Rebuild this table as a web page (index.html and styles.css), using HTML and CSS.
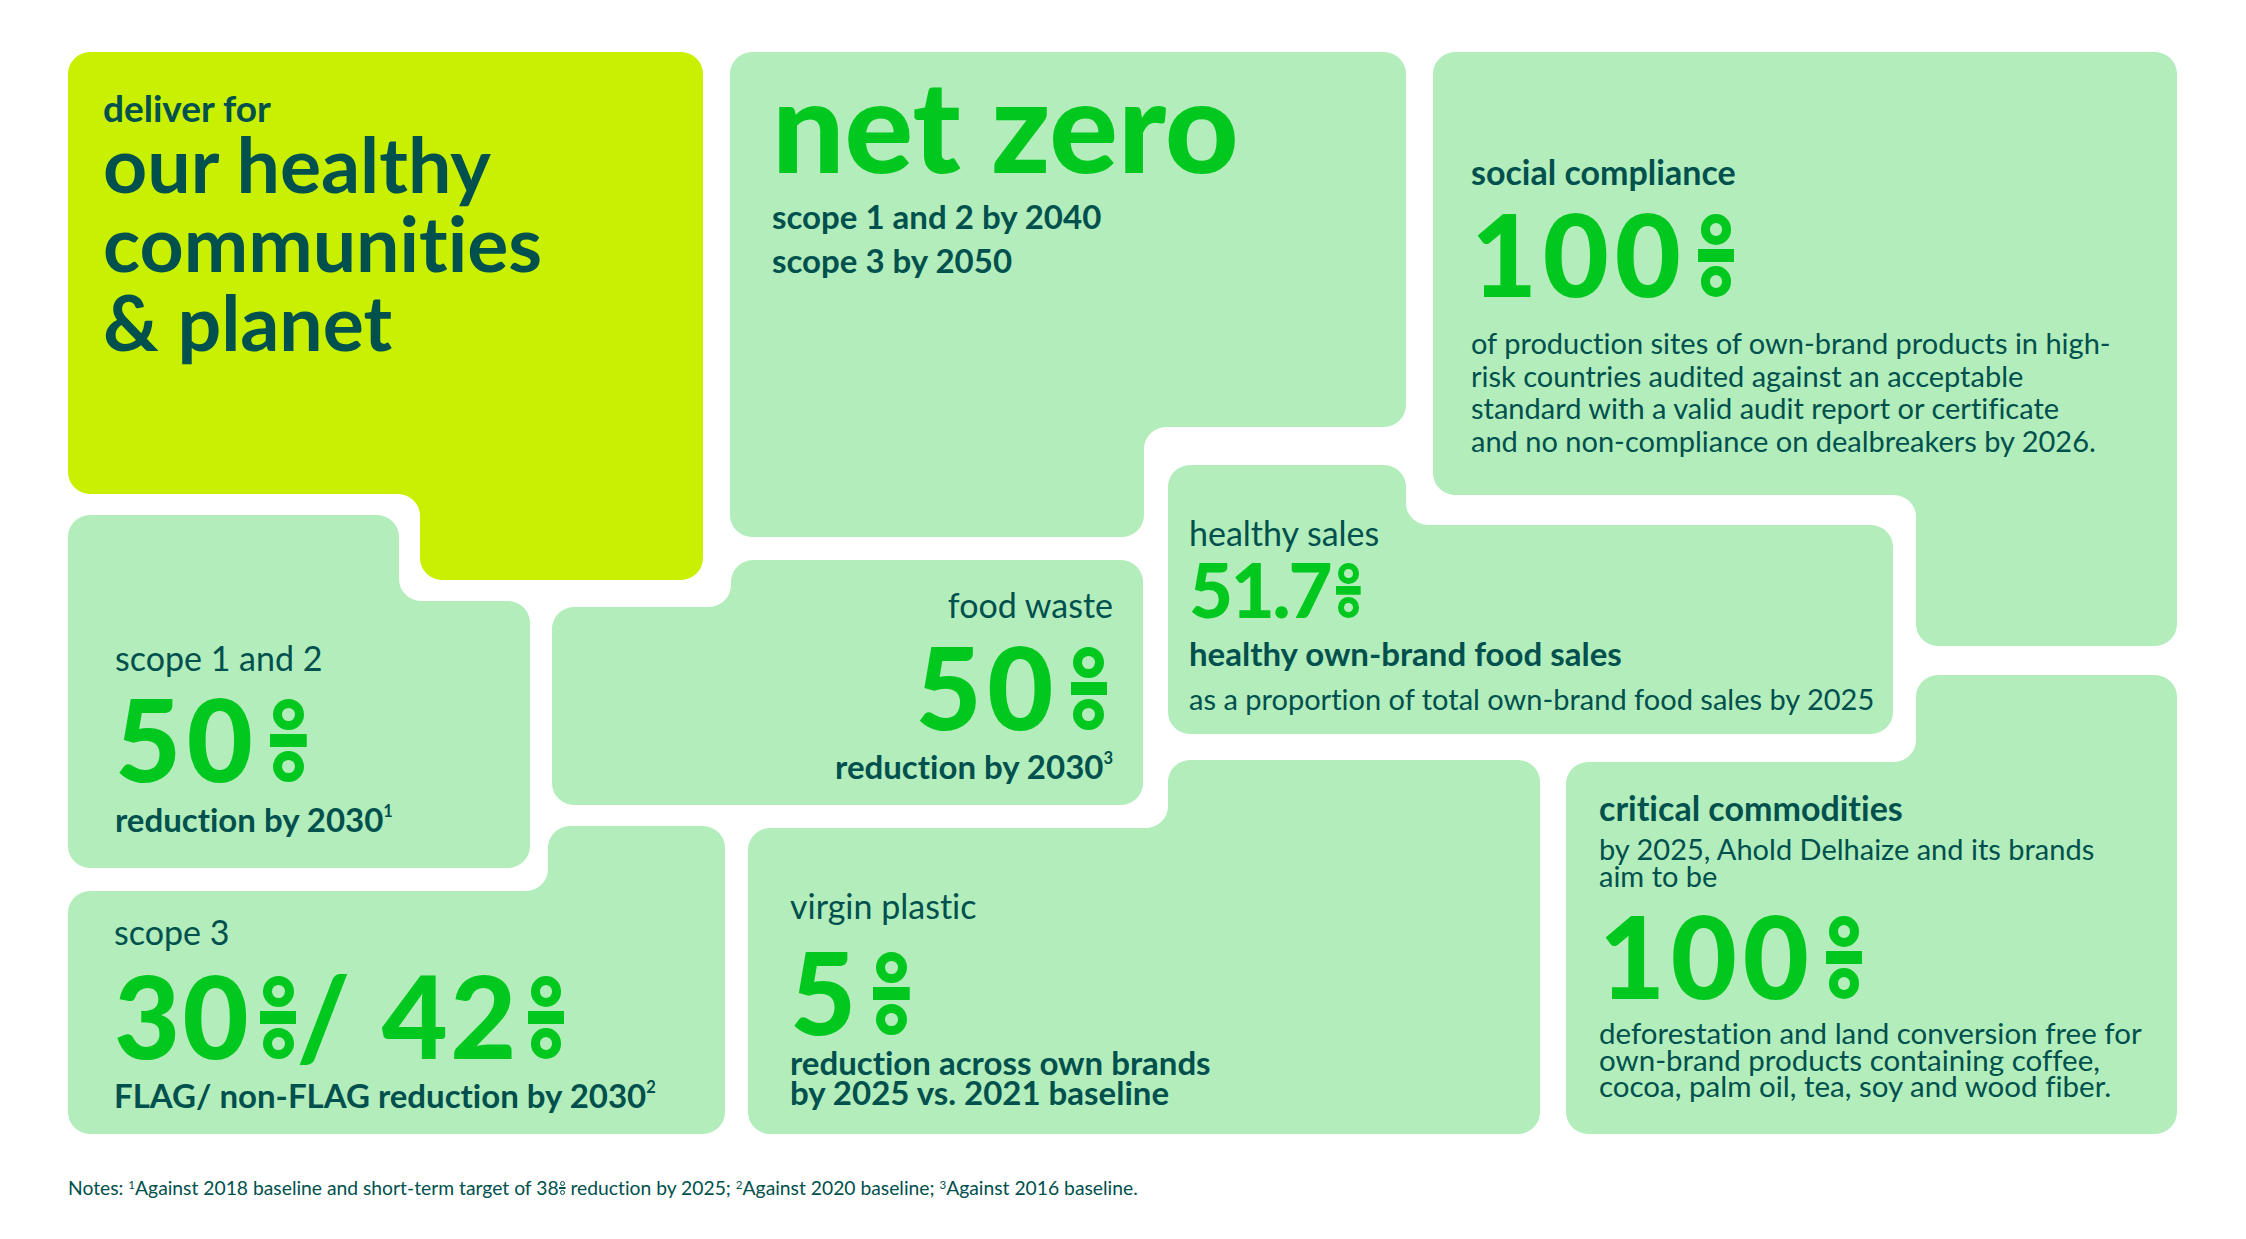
FILE: index.html
```html
<!DOCTYPE html>
<html lang="en">
<head>
<meta charset="utf-8">
<title>deliver for our healthy communities &amp; planet</title>
<link rel="stylesheet" href="styles.css">
</head>
<body>
<main class="board">
  <section class="card lime">
    <p class="kicker">deliver for</p>
    <h1 class="headline">our healthy<br>communities<br>&amp; planet</h1>
  </section>

  <section class="card net">
    <h2 class="netzero">net zero</h2>
    <p class="boldlines">scope 1 and 2 by 2040<br>scope 3 by 2050</p>
  </section>

  <section class="card social">
    <h3 class="head">social compliance</h3>
    <p class="big">100<span class="pct"><span class="pct-t">%</span></span></p>
    <p class="para">of production sites of own-brand products in high-risk countries audited against an acceptable standard with a valid audit report or certificate<br>and no non-compliance on dealbreakers by 2026.</p>
  </section>

  <section class="card s12">
    <p class="label">scope 1 and 2</p>
    <p class="big">50<span class="pct"><span class="pct-t">%</span></span></p>
    <p class="sub">reduction by 2030<sup>1</sup></p>
  </section>

  <section class="card food">
    <p class="label">food waste</p>
    <p class="big">50<span class="pct"><span class="pct-t">%</span></span></p>
    <p class="sub">reduction by 2030<sup>3</sup></p>
  </section>

  <section class="card healthy">
    <p class="label">healthy sales</p>
    <p class="mid">51.7<span class="pct"><span class="pct-t">%</span></span></p>
    <p class="sub">healthy own-brand food sales</p>
    <p class="line">as a proportion of total own-brand food sales by 2025</p>
  </section>

  <section class="card s3">
    <p class="label">scope 3</p>
    <p class="big">30<span class="pct"><span class="pct-t">%</span></span>/ 42<span class="pct"><span class="pct-t">%</span></span></p>
    <p class="sub">FLAG/ non-FLAG reduction by 2030<sup>2</sup></p>
  </section>

  <section class="card virgin">
    <p class="label">virgin plastic</p>
    <p class="big">5<span class="pct"><span class="pct-t">%</span></span></p>
    <p class="sub tight">reduction across own brands<br>by 2025 vs. 2021 baseline</p>
  </section>

  <section class="card critical">
    <h3 class="head">critical commodities</h3>
    <p class="intro">by 2025, Ahold Delhaize and its brands aim to be</p>
    <p class="big">100<span class="pct"><span class="pct-t">%</span></span></p>
    <p class="desc">deforestation and land conversion free for own-brand products containing coffee, cocoa, palm oil, tea, soy and wood fiber.</p>
  </section>
</main>
<p class="notes">Notes: <sup>1</sup>Against 2018 baseline and short-term target of 38<span class="pct"><span class="pct-t">%</span></span> reduction by 2025; <sup>2</sup>Against 2020 baseline; <sup>3</sup>Against 2016 baseline.</p>
</body>
</html>
```

FILE: styles.css
```css
:root {
  --card: #b2edbb;
  --lime: #c8f000;
  --green: #00c81e;
  --teal: #00504d;
}

html, body {
  margin: 0;
  padding: 0;
}

body {
  width: 2246px;
  height: 1239px;
  overflow: hidden;
  background: #ffffff;
  font-family: Lato, "Noto Sans", sans-serif;
  font-variant-ligatures: none;
  color: var(--teal);
}

p, h1, h2, h3 {
  margin: 0;
  font-weight: inherit;
}

.board {
  display: grid;
  width: 2109px;
  margin: 52px 0 0 68px;
  grid-template-columns: 462px 22px 151px 22px 5px 18px 395px 25px 238px 27px 107px 26px 327px 284px;
  grid-template-rows: 413px 50px 22px 23px 20px 66px 29px 59px 26px 45px 21px 42px 266px;
}

.card {
  display: flex;
  flex-direction: column;
  align-items: flex-start;
  background: var(--card);
}

/* ---------- card shapes ---------- */
.lime {
  grid-column: 1 / 4;
  grid-row: 1 / 6;
  background: var(--lime);
  padding: 36px 0 0 35px;
  clip-path: path("M22,0 H613 A22,22 0 0 1 635,22 V506 A22,22 0 0 1 613,528 H374 A22,22 0 0 1 352,506 V464 A22,22 0 0 0 330,442 H22 A22,22 0 0 1 0,420 V22 A22,22 0 0 1 22,0 Z");
}

.net {
  grid-column: 6 / 10;
  grid-row: 1 / 4;
  padding: 0 0 0 42px;
  clip-path: path("M22,0 H654 A22,22 0 0 1 676,22 V353 A22,22 0 0 1 654,375 H436 A22,22 0 0 0 414,397 V463 A22,22 0 0 1 392,485 H22 A22,22 0 0 1 0,463 V22 A22,22 0 0 1 22,0 Z");
}

.social {
  grid-column: 11 / 15;
  grid-row: 1 / 7;
  padding: 101px 0 0 38px;
  clip-path: path("M22,0 H722 A22,22 0 0 1 744,22 V572 A22,22 0 0 1 722,594 H505 A22,22 0 0 1 483,572 V465 A22,22 0 0 0 461,443 H22 A22,22 0 0 1 0,421 V22 A22,22 0 0 1 22,0 Z");
}

.s12 {
  grid-column: 1 / 2;
  grid-row: 3 / 13;
  padding: 124px 0 0 47px;
  clip-path: path("M22,0 H309 A22,22 0 0 1 331,22 V64 A22,22 0 0 0 353,86 H440 A22,22 0 0 1 462,108 V331 A22,22 0 0 1 440,353 H22 A22,22 0 0 1 0,331 V22 A22,22 0 0 1 22,0 Z");
}

.food {
  grid-column: 3 / 8;
  grid-row: 5 / 11;
  align-items: flex-end;
  padding: 26px 30px 0 0;
  text-align: right;
  clip-path: path("M201,0 H569 A22,22 0 0 1 591,22 V223 A22,22 0 0 1 569,245 H22 A22,22 0 0 1 0,223 V69 A22,22 0 0 1 22,47 H157 A22,22 0 0 0 179,25 V22 A22,22 0 0 1 201,0 Z");
}

.healthy {
  grid-column: 9 / 14;
  grid-row: 2 / 9;
  padding: 49px 0 0 21px;
  clip-path: path("M22,0 H216 A22,22 0 0 1 238,22 V38 A22,22 0 0 0 260,60 H703 A22,22 0 0 1 725,82 V247 A22,22 0 0 1 703,269 H22 A22,22 0 0 1 0,247 V22 A22,22 0 0 1 22,0 Z");
}

.s3 {
  grid-column: 1 / 5;
  grid-row: 12 / 14;
  padding: 87px 0 0 46px;
  clip-path: path("M502,0 H635 A22,22 0 0 1 657,22 V286 A22,22 0 0 1 635,308 H22 A22,22 0 0 1 0,286 V87 A22,22 0 0 1 22,65 H458 A22,22 0 0 0 480,43 V22 A22,22 0 0 1 502,0 Z");
}

.virgin {
  grid-column: 7 / 12;
  grid-row: 10 / 14;
  padding: 127px 0 0 42px;
  clip-path: path("M442,0 H770 A22,22 0 0 1 792,22 V352 A22,22 0 0 1 770,374 H22 A22,22 0 0 1 0,352 V90 A22,22 0 0 1 22,68 H398 A22,22 0 0 0 420,46 V22 A22,22 0 0 1 442,0 Z");
}

.critical {
  grid-column: 13 / 15;
  grid-row: 8 / 14;
  padding: 114px 0 0 33px;
  clip-path: path("M372,0 H589 A22,22 0 0 1 611,22 V437 A22,22 0 0 1 589,459 H22 A22,22 0 0 1 0,437 V109 A22,22 0 0 1 22,87 H328 A22,22 0 0 0 350,65 V22 A22,22 0 0 1 372,0 Z");
}

/* ---------- typography ---------- */
.kicker {
  font-size: 37px;
  line-height: 40px;
  font-weight: 700;
}

.headline {
  margin-top: -4px;
  font-size: 77px;
  line-height: 79px;
  font-weight: 700;
}

.netzero {
  margin-top: -5px;
  font-size: 128px;
  line-height: 154px;
  font-weight: 900;
  color: var(--green);
}

.boldlines {
  margin-top: -7px;
  font-size: 33px;
  line-height: 44px;
  font-weight: 700;
}

.head {
  font-size: 34px;
  line-height: 38px;
  font-weight: 700;
}

.label {
  font-size: 34px;
  line-height: 38px;
  font-weight: 400;
}

.big {
  font-size: 114px;
  line-height: 137px;
  font-weight: 900;
  color: var(--green);
  letter-spacing: 0.05em;
  white-space: nowrap;
}

.mid {
  margin-top: -9px;
  font-size: 76px;
  line-height: 92px;
  font-weight: 900;
  color: var(--green);
  letter-spacing: -0.03em;
  white-space: nowrap;
}

.sub {
  font-size: 33px;
  line-height: 38px;
  font-weight: 700;
}

.sub.tight {
  line-height: 30px;
}

.line {
  margin-top: 10px;
  font-size: 29px;
  line-height: 34px;
}

.para {
  max-width: 652px;
  font-size: 29px;
  line-height: 32.7px;
}

.intro {
  margin-top: 8px;
  max-width: 520px;
  font-size: 29px;
  line-height: 27px;
}

.desc {
  max-width: 566px;
  font-size: 29.5px;
  line-height: 26.5px;
}

/* per-card vertical rhythm */
.social .big { margin-top: -7.5px; }
.social .para { margin-top: 6.5px; }
.s12 .big { margin-top: -8.5px; }
.s12 .sub { margin-top: -5.5px; }
.food .big { margin-top: -7.5px; margin-right: 6px; }
.food .sub { margin-top: -6.5px; }
.healthy .sub { margin-top: -1px; }
.s3 .big { margin-top: -5.5px; letter-spacing: 0.02em; }
.s3 .sub { margin-top: -6.5px; }
.virgin .big { margin-top: -3.5px; }
.virgin .sub { margin-top: -11.5px; }
.critical .big { margin-top: -3.5px; }
.critical .desc { margin-top: -2.5px; }

sup {
  font-size: 0.5em;
  line-height: 0;
  vertical-align: 0.9em;
  letter-spacing: 0;
}

/* stacked ring-bar-ring percent sign (the % character is kept as text) */
.pct {
  --pc: var(--green);
  display: inline-block;
  position: relative;
  width: 0.32em;
  height: 0.72em;
  margin-left: 0.1em;
  overflow: hidden;
  color: transparent;
  line-height: 0.5em;
  letter-spacing: 0;
  vertical-align: baseline;
  background: linear-gradient(var(--pc), var(--pc)) center / 100% 0.115em no-repeat;
}

.pct-t {
  font-size: 0.2em;
  line-height: 1;
}

.pct::before,
.pct::after {
  content: "";
  position: absolute;
  left: 50%;
  width: 0.27em;
  height: 0.27em;
  margin-left: -0.135em;
  border: 0.085em solid var(--pc);
  border-radius: 50%;
  box-sizing: border-box;
}

.pct::before { top: 0; }
.pct::after { bottom: 0; }

.mid .pct { margin-left: 0.08em; }
.s3 .pct { margin-left: 0.08em; }

.notes {
  margin: 43px 0 0 68px;
  font-size: 19.3px;
  line-height: 22px;
}

.notes .pct {
  --pc: var(--teal);
  margin-left: 0.04em;
}

.notes sup {
  font-size: 0.6em;
  vertical-align: 0.55em;
}
```
